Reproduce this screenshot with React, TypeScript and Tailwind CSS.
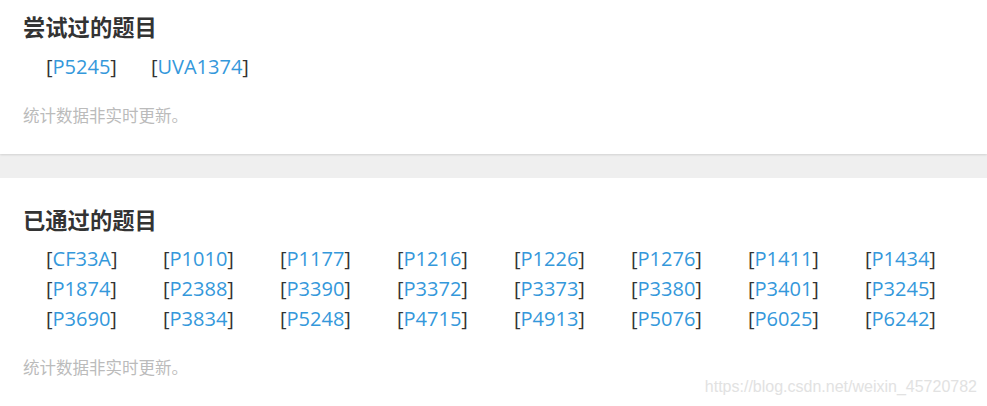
const tried = ["P5245", "UVA1374"];

const passed = [
  "CF33A", "P1010", "P1177", "P1216", "P1226", "P1276", "P1411", "P1434",
  "P1874", "P2388", "P3390", "P3372", "P3373", "P3380", "P3401", "P3245",
  "P3690", "P3834", "P5248", "P4715", "P4913", "P5076", "P6025", "P6242",
];

const font = { fontFamily: '"Open Sans", "Noto Sans CJK SC", sans-serif' };

function Pid({ id }: { id: string }) {
  return (
    <span className="text-[20px] leading-[30px] text-[#333] whitespace-nowrap">
      [<span className="text-[#3498db]">{id}</span>]
    </span>
  );
}

function Note() {
  return (
    <p className="text-[16.5px] leading-[24px] text-[#bbb]">
      统计数据非实时更新。
    </p>
  );
}

export default function App() {
  return (
    <div
      className="relative w-[987px] h-[406px] bg-[#efefef] overflow-hidden"
      style={font}
    >
      <section className="bg-white px-[23px] pt-[13px] pb-[26px] shadow-[0_1px_2px_rgba(0,0,0,0.12)]">
        <h3 className="text-[22.3px] leading-[30px] font-bold text-[#333]">
          尝试过的题目
        </h3>
        <div className="flex gap-[34px] pl-[23px] mt-[9px]">
          {tried.map((p) => (
            <Pid key={p} id={p} />
          ))}
        </div>
        <div className="mt-[22px]">
          <Note />
        </div>
      </section>

      <section className="mt-[24px] bg-white px-[23px] pt-[28px] pb-[40px]">
        <h3 className="text-[22.3px] leading-[30px] font-bold text-[#333]">
          已通过的题目
        </h3>
        <div className="grid grid-cols-[repeat(8,117px)] pl-[23px] mt-[8px]">
          {passed.map((p) => (
            <Pid key={p} id={p} />
          ))}
        </div>
        <div className="mt-[22px]">
          <Note />
        </div>
      </section>

      <span
        className="absolute right-[10px] bottom-[10px] text-[16px] leading-[18px] text-[#e2e2e2]"
        style={{ fontFamily: '"Liberation Sans", Arial, sans-serif' }}
      >
        https://blog.csdn.net/weixin_45720782
      </span>
    </div>
  );
}
